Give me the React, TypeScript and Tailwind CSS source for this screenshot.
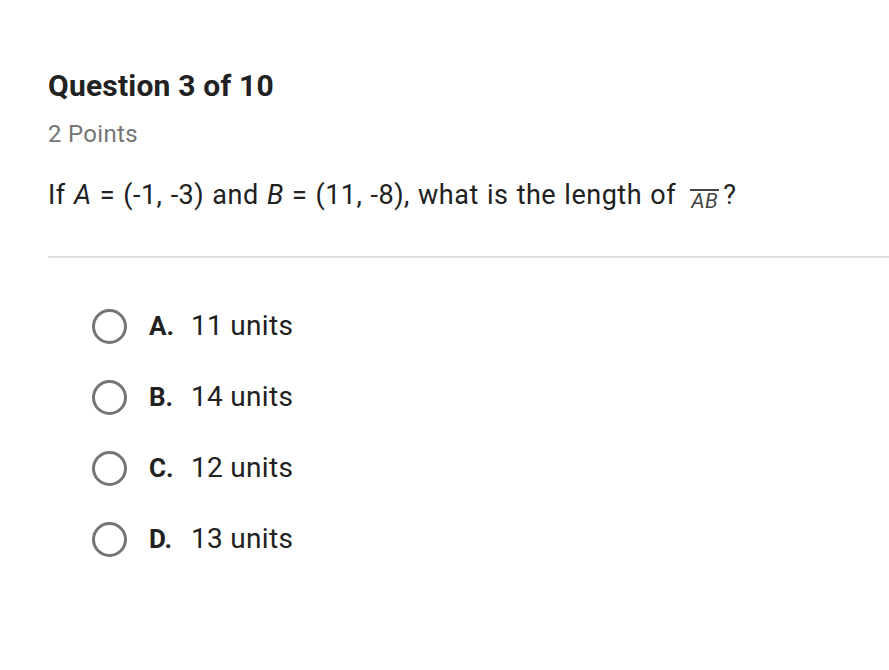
import React from "react";

const options = [
  { letter: "A.", text: "11 units" },
  { letter: "B.", text: "14 units" },
  { letter: "C.", text: "12 units" },
  { letter: "D.", text: "13 units" },
];

export default function App() {
  return (
    <div className="w-[889px] h-[670px] bg-white text-[#212121]" style={{ fontFamily: "Roboto, sans-serif" }}>
      <div className="pl-12 pt-[66px]">
        <h1 className="text-[30px] font-bold leading-10 tracking-[0.2px]">Question 3 of 10</h1>
        <div className="mt-[14px] text-[24px] leading-7 tracking-[0.3px] text-[#757575]">2 Points</div>
        <p className="mt-[29px] text-[27px] leading-9 tracking-[0.5px] [word-spacing:1px]">
          If <i>A</i> = (-1, -3) and <i>B</i> = (11, -8), what is the length of{" "}
          <span className="relative top-[4px] ml-[6px] mr-[4px] inline-block border-t-2 border-[#444] px-[1px] text-[21px] italic leading-5 text-[#444]">
            AB
          </span>
          ?
        </p>
        <div className="mt-[43px] h-[2px] bg-[#e0e0e0]" />
        <ul className="mt-[50px] flex flex-col gap-[35px] pl-[44px]">
          {options.map((o) => (
            <li key={o.letter} className="flex h-9 items-center">
              <span className="h-[35px] w-[35px] rounded-full border-[3px] border-[#757575]" />
              <span className="ml-[22px] w-[42px] text-[26px] font-bold">{o.letter}</span>
              <span className="text-[28px] tracking-[0.3px]">{o.text}</span>
            </li>
          ))}
        </ul>
      </div>
    </div>
  );
}
